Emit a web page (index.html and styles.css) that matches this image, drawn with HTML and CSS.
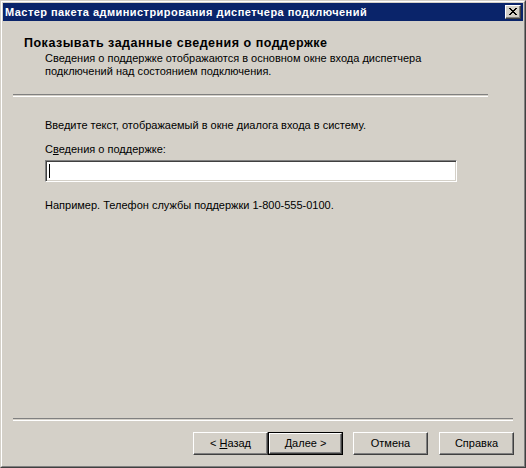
FILE: index.html
```html
<!DOCTYPE html>
<html lang="ru">
<head>
<meta charset="utf-8">
<link rel="stylesheet" href="styles.css">
</head>
<body>
<div class="window">
  <div class="inner">
    <div class="titlebar">
      <span class="title">Мастер пакета администрирования диспетчера подключений</span>
      <span class="close"><svg width="8" height="7" viewBox="0 0 8 7"><path d="M0 0h2v1h1v1h2V1h1V0h2v1H7v1H6v1H5v1h1v1h1v1h1v1H6V6H5V5H3v1H2v1H0V6h1V5h1V4h1V3H2V2H1V1H0z" fill="#000"/></svg></span>
    </div>
    <div class="header">
      <div class="h-title">Показывать заданные сведения о поддержке</div>
      <div class="h-sub">Сведения о поддержке отображаются в основном окне входа диспетчера<br>подключений над состоянием подключения.</div>
    </div>
    <div class="sep sep-top"></div>
    <div class="content">
      <div class="p1">Введите текст, отображаемый в окне диалога входа в систему.</div>
      <div class="label">С<u>в</u>едения о поддержке:</div>
      <div class="edit"><span class="caret"></span></div>
      <div class="p2">Например. Телефон службы поддержки 1-800-555-0100.</div>
    </div>
    <div class="sep sep-bottom"></div>
    <div class="buttons">
      <div class="btn"><span class="lbl">&lt; <u>Н</u>азад</span></div>
      <div class="btn default"><span class="face"><span class="lbl"><u>Д</u>алее &gt;</span></span></div>
      <div class="btn gap"><span class="lbl">Отмена</span></div>
      <div class="btn gap2"><span class="lbl">Справка</span></div>
    </div>
  </div>
</div>
</body>
</html>
```
FILE: styles.css
```css
html, body {
  margin: 0;
  padding: 0;
  background: #d4d0c8;
}
body {
  font-family: "Liberation Sans", Arial, sans-serif;
  font-size: 11px;
  color: #000;
}
.window {
  width: 526px;
  height: 468px;
  box-sizing: border-box;
  border-top: 1px solid #d4d0c8;
  border-left: 1px solid #d4d0c8;
  border-right: 1px solid #404040;
  border-bottom: 1px solid #404040;
}
.inner {
  height: 100%;
  box-sizing: border-box;
  border-top: 1px solid #ffffff;
  border-left: 1px solid #ffffff;
  border-right: 1px solid #808080;
  border-bottom: 1px solid #808080;
  padding: 1px;
  display: flex;
  flex-direction: column;
}
.titlebar {
  height: 18px;
  background: #0a246a;
  display: flex;
  align-items: center;
  justify-content: space-between;
  padding: 0 2px 0 2px;
}
.title {
  color: #fff;
  font-weight: bold;
  font-size: 11px;
  letter-spacing: 0.45px;
  white-space: nowrap;
}
.close {
  width: 16px;
  height: 14px;
  box-sizing: border-box;
  background: #d4d0c8;
  border-top: 1px solid #fff;
  border-left: 1px solid #fff;
  border-right: 1px solid #404040;
  border-bottom: 1px solid #404040;
  box-shadow: inset -1px -1px 0 #808080;
  display: flex;
  align-items: center;
  justify-content: center;
}
.close svg { display: block; margin: 0 1px 1px 0; }
.header {
  padding: 15px 0 0 21px;
}
.h-title {
  font-weight: bold;
  font-size: 12.5px;
  line-height: 14px;
  letter-spacing: 0.5px;
}
.h-sub {
  margin: 2px 0 0 21px;
  line-height: 13px;
}
.sep {
  height: 1px;
  border-top: 1px solid #808080;
  border-bottom: 1px solid #ffffff;
}
.sep-top {
  margin: 16px 35px 0 10px;
}
.content {
  flex: 1;
  padding: 22px 0 0 42px;
}
.p1 { line-height: 13px; }
.label { line-height: 13px; margin-top: 11px; }
.edit {
  margin-top: 4px;
  width: 412px;
  height: 22px;
  box-sizing: border-box;
  background: #fff;
  border-top: 1px solid #808080;
  border-left: 1px solid #808080;
  border-right: 1px solid #ffffff;
  border-bottom: 1px solid #ffffff;
  box-shadow: inset 1px 1px 0 #404040, inset -1px -1px 0 #d4d0c8;
  padding: 3px 0 0 3px;
}
.caret {
  display: block;
  width: 1px;
  height: 14px;
  background: #000;
}
.p2 { line-height: 13px; margin-top: 17px; }
.sep-bottom {
  margin: 0 10px 0 10px;
}
.buttons {
  display: flex;
  padding: 11px 0 10px 190px;
}
.btn {
  width: 75px;
  height: 23px;
  box-sizing: border-box;
  border-top: 1px solid #fff;
  border-left: 1px solid #fff;
  border-right: 1px solid #404040;
  border-bottom: 1px solid #404040;
  box-shadow: inset -1px -1px 0 #808080;
  display: flex;
  align-items: center;
  justify-content: center;
  line-height: 13px;
}
.lbl { white-space: pre; }
.btn.default {
  border: 1px solid #000;
  box-shadow: none;
  padding: 0;
}
.btn.default .face {
  width: 100%;
  height: 100%;
  box-sizing: border-box;
  border-top: 1px solid #fff;
  border-left: 1px solid #fff;
  border-right: 1px solid #404040;
  border-bottom: 1px solid #404040;
  box-shadow: inset -1px -1px 0 #808080;
  display: flex;
  align-items: center;
  justify-content: center;
}
.btn.gap { margin-left: 10px; }
.btn.gap2 { margin-left: 11px; }
```
